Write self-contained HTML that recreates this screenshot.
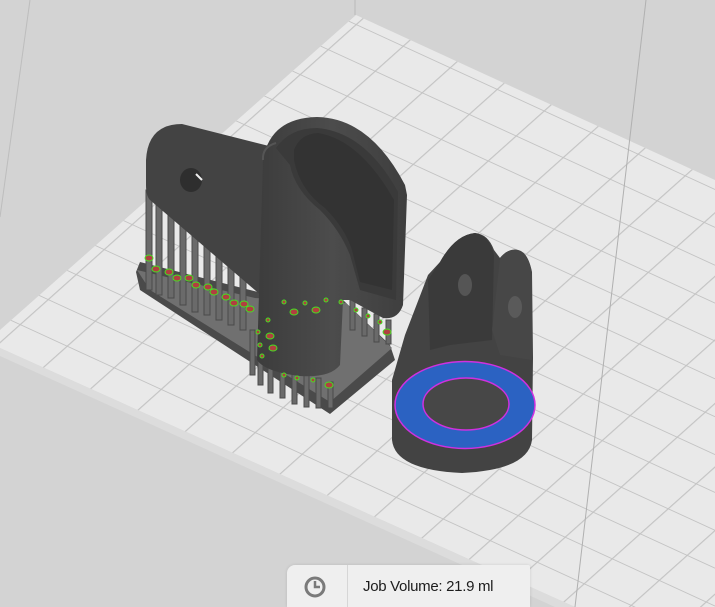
<!DOCTYPE html>
<html><head><meta charset="utf-8"><style>
html,body{margin:0;padding:0;width:715px;height:607px;overflow:hidden;background:#d3d3d3;font-family:"Liberation Sans",sans-serif}
svg{position:absolute;left:0;top:0}
.panel{position:absolute;left:287px;top:565px;width:243px;height:42px;background:#efefef;border-top-left-radius:8px;border-top-right-radius:2px;box-shadow:0 0 3px rgba(0,0,0,.12)}
.div{position:absolute;left:60px;top:0;width:1px;height:42px;background:#d6d6d6}
.txt{position:absolute;left:76px;top:13px;font-size:15px;color:#1c1c1c;letter-spacing:-0.3px}
</style></head><body>
<svg width="715" height="607" viewBox="0 0 715 607">
<defs>
<pattern id="g" patternUnits="userSpaceOnUse" width="1" height="1" patternTransform="matrix(47 21.6 -28 25 356 24)">
<path d="M0 0H1M0 0V1" stroke="#c4c4c4" stroke-width="0.05" fill="none"/>
</pattern>
<linearGradient id="body" x1="0" x2="1"><stop offset="0" stop-color="#3c3c3c"/><stop offset=".5" stop-color="#4c4c4c"/><stop offset="1" stop-color="#3e3e3e"/></linearGradient>
</defs>
<polygon points="356,15 715,180 715,607 575,607 0,348 0,330" fill="#e9e9e9"/>
<polygon points="356,15 715,180 715,607 575,607 0,348 0,330" fill="url(#g)"/>
<polygon points="0,348 575,607 555,607 0,356" fill="#dcdcdc"/>
<line x1="355" y1="0" x2="355" y2="15" stroke="#b8b8b8"/>
<line x1="646" y1="0" x2="575" y2="607" stroke="#b0b0b0"/>
<line x1="30" y1="0" x2="0" y2="217" stroke="#bdbdbd"/>
<polygon points="136,272 140,290 330,414 395,360 390,345 343,300 258,292 140,262" fill="#4a4a4a"/>
<polygon points="137,270 255,298 346,303 392,348 330,402 150,290" fill="#707070"/>
<g fill="#6a6a6a" stroke="#4a4a4a" stroke-width="1">
<rect x="146" y="190" width="6" height="100"/><rect x="156" y="195" width="6" height="100"/>
<rect x="168" y="198" width="6" height="100"/><rect x="180" y="205" width="6" height="100"/>
<rect x="192" y="212" width="6" height="100"/><rect x="204" y="220" width="6" height="95"/>
<rect x="216" y="230" width="6" height="90"/><rect x="228" y="240" width="6" height="85"/>
<rect x="240" y="250" width="6" height="80"/>
<rect x="250" y="330" width="5" height="45"/><rect x="258" y="345" width="5" height="40"/>
<rect x="268" y="355" width="5" height="38"/><rect x="280" y="362" width="5" height="36"/>
<rect x="292" y="370" width="5" height="34"/><rect x="304" y="375" width="5" height="32"/>
<rect x="316" y="378" width="5" height="30"/><rect x="328" y="382" width="5" height="26"/>
<rect x="350" y="300" width="5" height="30"/><rect x="362" y="308" width="5" height="28"/>
<rect x="374" y="314" width="5" height="28"/><rect x="386" y="320" width="5" height="24"/>
</g>
<path d="M150,200 Q146,196 146,185 L146,160 Q148,124 182,124 L273,147 L270,255 L263,297 Z" fill="#434343"/>
<ellipse cx="191" cy="180" rx="11" ry="12" fill="#2e2e2e"/>
<path d="M196,174 L202,180" stroke="#eee" stroke-width="2"/>
<path d="M263,160 Q270,118 317,117 Q370,118 405,185 L407,195 L403,305 Q398,320 383,318 L350,300 L343,300 L340,365 Q330,378 300,376 Q265,372 257,360 Z" fill="url(#body)"/>
<path d="M276,148 Q290,128 317,128 Q365,132 398,192 L396,300 L360,290 L350,255 Q340,230 320,210 Q295,190 290,165 Z" fill="#3a3a3a"/>
<path d="M294,150 Q300,134 318,133 Q360,140 394,200 L392,290 L360,282 L352,250 Q345,228 325,208 Q300,190 294,160 Z" fill="#333"/>
<path d="M263,160 Q262,147 276,143" stroke="#555" stroke-width="2" fill="none"/>
<g fill="#b04040" stroke="#44e022" stroke-width="1">
<ellipse cx="149" cy="258" rx="4" ry="3"/><ellipse cx="156" cy="269" rx="4" ry="3"/>
<ellipse cx="169" cy="272" rx="4" ry="3"/><ellipse cx="177" cy="278" rx="4" ry="3"/>
<ellipse cx="189" cy="278" rx="4" ry="3"/><ellipse cx="196" cy="285" rx="4" ry="3"/>
<ellipse cx="208" cy="287" rx="4" ry="3"/><ellipse cx="214" cy="292" rx="4" ry="3"/>
<ellipse cx="226" cy="297" rx="4" ry="3"/><ellipse cx="234" cy="303" rx="4" ry="3"/>
<ellipse cx="244" cy="304" rx="4" ry="3"/><ellipse cx="250" cy="309" rx="4" ry="3"/>
<ellipse cx="294" cy="312" rx="4" ry="3"/><ellipse cx="316" cy="310" rx="4" ry="3"/>
<ellipse cx="270" cy="336" rx="4" ry="3"/><ellipse cx="273" cy="348" rx="4" ry="3"/>
<ellipse cx="329" cy="385" rx="4" ry="3"/><ellipse cx="387" cy="332" rx="4" ry="3"/>
<ellipse cx="268" cy="320" rx="2" ry="2"/><ellipse cx="284" cy="302" rx="2" ry="2"/>
<ellipse cx="305" cy="303" rx="2" ry="2"/><ellipse cx="326" cy="300" rx="2" ry="2"/>
<ellipse cx="258" cy="332" rx="2" ry="2"/><ellipse cx="260" cy="345" rx="2" ry="2"/>
<ellipse cx="262" cy="356" rx="2" ry="2"/><ellipse cx="284" cy="375" rx="2" ry="2"/>
<ellipse cx="297" cy="378" rx="2" ry="2"/><ellipse cx="313" cy="380" rx="2" ry="2"/>
<ellipse cx="341" cy="302" rx="2" ry="2"/><ellipse cx="356" cy="310" rx="2" ry="2"/>
<ellipse cx="368" cy="316" rx="2" ry="2"/><ellipse cx="380" cy="322" rx="2" ry="2"/>
</g>
<path d="M392,405 L392,440 Q395,470 462,473 Q528,470 532,440 L533,358 L532,272 Q528,252 518,250 Q508,248 500,258 L494,250 Q488,234 475,233 Q455,235 440,262 L428,275 L405,335 L392,380 Z" fill="#434343"/>
<path d="M440,262 Q455,235 475,233 Q490,236 494,255 L492,340 L450,345 L430,350 L428,280 Z" fill="#3a3a3a"/>
<path d="M500,258 Q508,248 518,250 Q530,256 532,275 L532,360 L500,355 L492,330 Z" fill="#474747"/>
<ellipse cx="465" cy="285" rx="7" ry="11" fill="#555"/>
<ellipse cx="515" cy="307" rx="7" ry="11" fill="#5a5a5a"/>
<ellipse cx="465" cy="405" rx="70" ry="43.5" fill="#2b62c2" stroke="#d030e0" stroke-width="1.5"/>
<ellipse cx="466" cy="404" rx="43" ry="26" fill="#474747" stroke="#d030e0" stroke-width="1.5"/>
</svg>
<div class="panel"><div class="div"></div>
<svg width="24" height="24" style="left:16px;top:10px" viewBox="0 0 24 24"><circle cx="12" cy="12" r="9" fill="none" stroke="#7a7a7a" stroke-width="3"/><path d="M12 6V12H17" stroke="#7a7a7a" stroke-width="2.5" fill="none"/></svg>
<div class="txt">Job Volume: 21.9 ml</div></div>
</body></html>
